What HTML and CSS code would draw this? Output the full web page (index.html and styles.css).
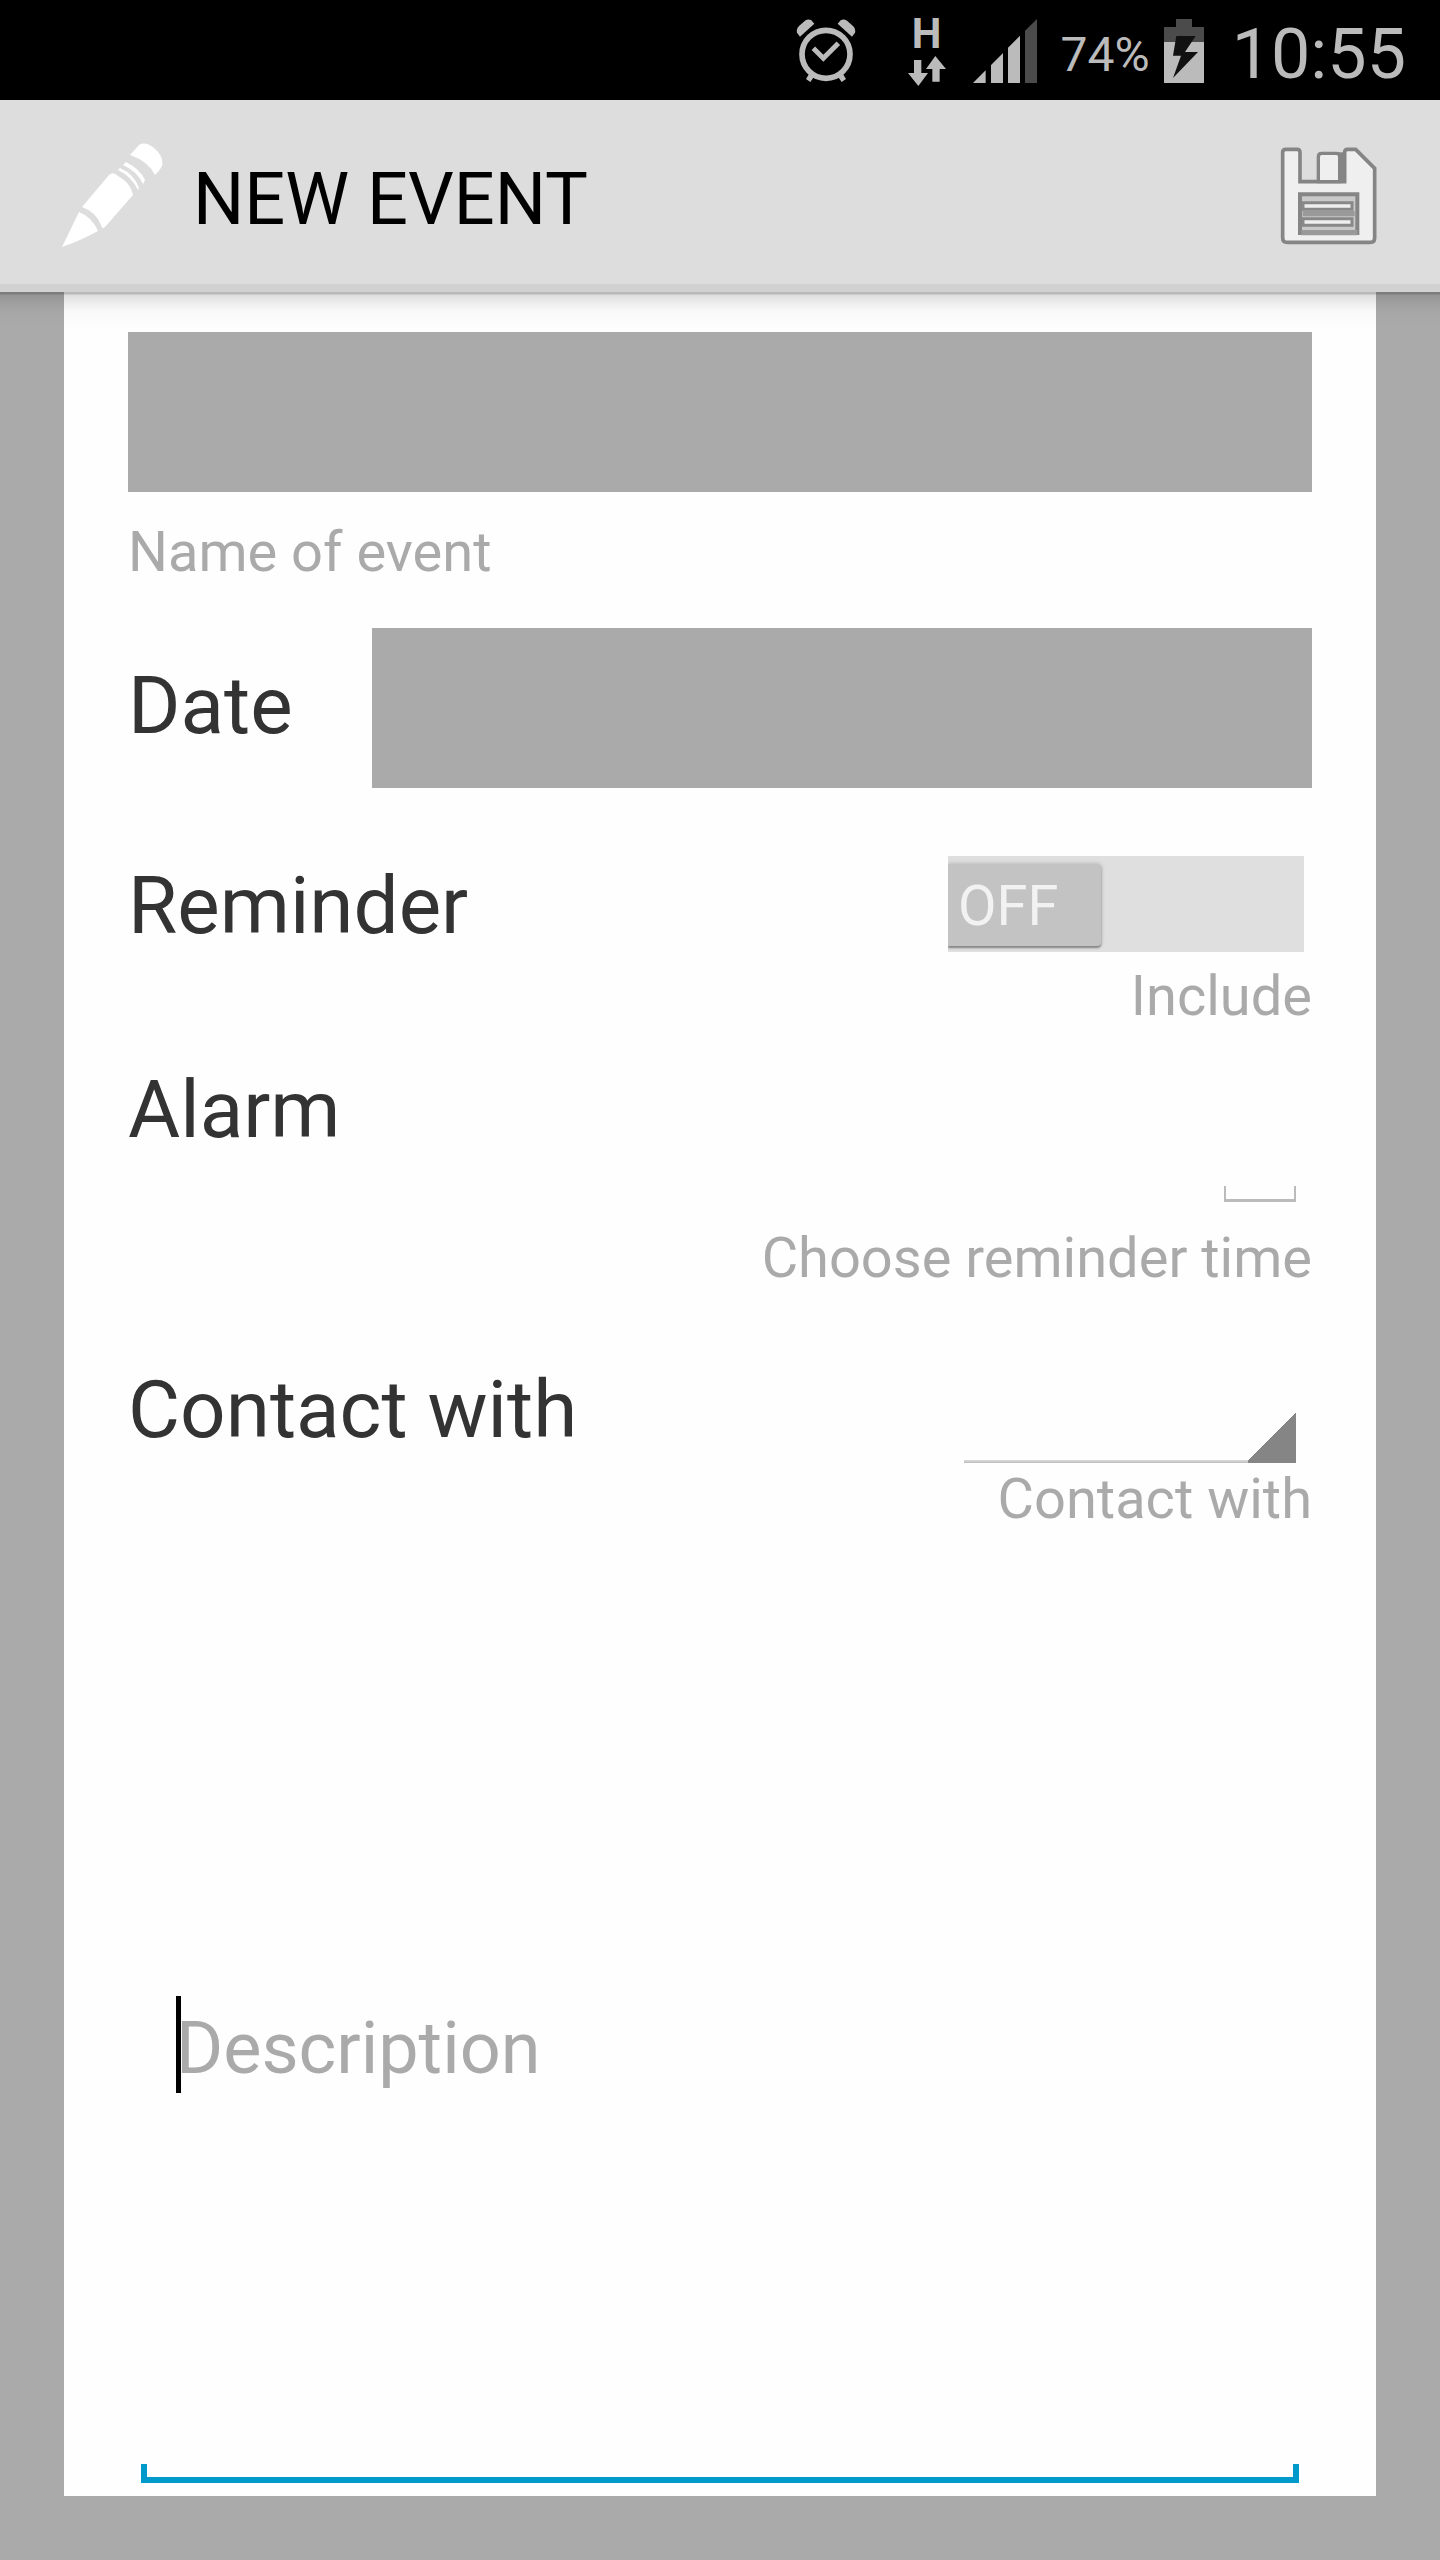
FILE: index.html
```html
<!DOCTYPE html>
<html lang="en">
<head>
<meta charset="utf-8">
<meta name="viewport" content="width=device-width, initial-scale=1">
<title>New event</title>
<link rel="stylesheet" href="styles.css">
</head>
<body>
<div class="status-bar">
  <svg class="icon-alarm" viewBox="50 58 180 192" aria-hidden="true">
    <circle cx="140" cy="164" r="72" fill="none" stroke="#bbb" stroke-width="17"/>
    <path d="M102 146l30 30 45-45" fill="none" stroke="#bbb" stroke-width="15"/>
    <path d="M62 111l-9-12q-3-12 6-20l18-16q10-6 19-1l9 10zM218 111l9-12q3-12-6-20l-18-16q-10-6-19-1l-9 10z" fill="#bbb"/>
    <path d="M89 223l-9 15 13 9 11-16zM191 223l9 15-13 9-11-16z" fill="#bbb"/>
  </svg>
  <div class="network">
    <span class="network-type">H</span>
    <svg class="icon-arrows" viewBox="387 168 114 90" aria-hidden="true">
      <path d="M405 180h22v39h20l-29 39-31-39h18zM469 168l32 39h-19v38h-22v-38h-19z" fill="#bbb"/>
    </svg>
  </div>
  <svg class="icon-signal" viewBox="582 57 192 192" aria-hidden="true">
    <path d="M582 249l38-38v38zM636 249v-54l36-36v90zM687 249V143l36-36v142z" fill="#bbb"/>
    <path d="M738 249V92l36-35v192z" fill="#4b4b4b"/>
  </svg>
  <span class="battery-level">74%</span>
  <svg class="icon-battery" viewBox="369 54 120 192" aria-hidden="true">
    <path d="M369 123V78h36V54h48v24h36v45z" fill="#4b4b4b"/>
    <path d="M369 123h120v123H369z" fill="#bbb"/>
    <path d="M406 105h58l-32 48h39l-75 78 24-67h-24z" fill="#111"/>
  </svg>
  <span class="clock">10:55</span>
</div>

<header class="action-bar">
  <svg class="icon-pencil" viewBox="60 142 104 108" aria-hidden="true">
    <path fill="#fff" d="M62 247L79 212Q92 217 98 231Q82 240 62 247zM82 207L109 175Q113 171 118 176Q131 183 133 195L105 227Q102 230 101 225Q96 212 82 207zM118 170l2-2q14 6 19 20l-1 2q-7-14-20-20zM123 165l3-3q14 7 19 18l-2 4q-6-13-20-19zM130 155L139 145Q145 141 154 148Q164 156 162 166Q159 172 155 175Q148 161 130 155z"/>
  </svg>
  <h1 class="title">NEW EVENT</h1>
  <button class="save" type="submit" form="event-form" aria-label="Save">
    <svg class="icon-save" viewBox="238 170 291 300" aria-hidden="true">
      <path d="M246 189q0-9 10-9h33q9 0 9 9v88h134v-88q0-9 9-9h24l57 57v208q0 14-14 14H260q-14 0-14-14z" fill="#efefef" stroke="#858585" stroke-width="11"/>
      <path d="M353 277v-75q0-10 10-10h44q10 0 10 10v75z" fill="#efefef" stroke="#858585" stroke-width="10"/>
      <path d="M423 189v85" stroke="#858585" stroke-width="16"/>
      <path d="M298 315h172v116H298z" fill="#c9c9c9" stroke="#858585" stroke-width="12"/>
      <path d="M306 373h156M302 430h168" stroke="#999" stroke-width="16"/>
      <path d="M307 340h147v20H307zM307 388h147v20H307z" fill="#efefef" stroke="#888" stroke-width="9"/>
    </svg>
  </button>
</header>

<main class="page">
  <form class="card" id="event-form">
    <input class="field" id="event-name" type="text">
    <label class="hint" for="event-name">Name of event</label>

    <div class="row row-date">
      <label class="label" for="event-date">Date</label>
      <input class="field" id="event-date" type="text">
    </div>

    <div class="row row-reminder">
      <label class="label" for="reminder">Reminder</label>
      <div class="control">
        <label class="switch">
          <input class="switch-input" id="reminder" type="checkbox" role="switch">
          <span class="switch-thumb">OFF</span>
        </label>
        <span class="hint">Include</span>
      </div>
    </div>

    <div class="row row-alarm">
      <label class="label" for="alarm">Alarm</label>
      <div class="control">
        <input class="alarm-input" id="alarm" type="text">
        <span class="hint">Choose reminder time</span>
      </div>
    </div>

    <div class="row row-contact">
      <label class="label" for="contact">Contact with</label>
      <div class="control">
        <select class="spinner" id="contact"><option value=""></option></select>
        <span class="hint">Contact with</span>
      </div>
    </div>

    <div class="description">
      <textarea class="description-input" placeholder="Description" aria-label="Description"></textarea>
      <span class="caret"></span>
    </div>
  </form>
</main>
</body>
</html>
```
FILE: styles.css
```css
* {
  box-sizing: border-box;
}

body {
  margin: 0;
  min-height: 100vh;
  display: flex;
  flex-direction: column;
  background: #aaa;
  font-family: Roboto, "Liberation Sans", sans-serif;
  color: #333;
}

input,
select,
textarea,
button {
  margin: 0;
  padding: 0;
  border: 0;
  border-radius: 0;
  background: none;
  appearance: none;
  outline: none;
  font: inherit;
  color: inherit;
}

svg {
  display: block;
  flex: none;
}

/* Status bar */

.status-bar {
  height: 100px;
  padding: 2px 34px 0 0;
  display: flex;
  align-items: center;
  justify-content: flex-end;
  background: #000;
  color: #bbb;
}

.icon-alarm {
  width: 60px;
  height: 64px;
  margin-right: 52px;
}

.network {
  margin-right: 27px;
  display: flex;
  flex-direction: column;
  align-items: center;
  gap: 4px;
}

.network-type {
  font-size: 42px;
  font-weight: 700;
  line-height: 36px;
}

.icon-arrows {
  width: 38px;
  height: 30px;
}

.icon-signal {
  width: 64px;
  height: 64px;
  margin-right: 24px;
}

.battery-level,
.clock {
  padding-top: 6px;
}

.battery-level {
  margin-right: 14px;
  font-size: 48px;
}

.icon-battery {
  width: 40px;
  height: 64px;
  margin-right: 28px;
}

.clock {
  font-size: 70px;
}

/* Action bar */

.action-bar {
  position: relative;
  height: 192px;
  padding: 8px 63px 0 60px;
  display: flex;
  align-items: center;
  background: #ddd;
  border-bottom: 8px solid #d1d1d1;
}

.action-bar::after {
  content: "";
  position: absolute;
  top: 100%;
  left: 0;
  right: 0;
  height: 38px;
  margin-top: 8px;
  background: linear-gradient(rgba(0, 0, 0, 0.27) 0 2px, rgba(0, 0, 0, 0.13) 3px, rgba(0, 0, 0, 0.07) 10px, rgba(0, 0, 0, 0.02) 20px, transparent);
  pointer-events: none;
}

.icon-pencil {
  width: 104px;
  height: 108px;
}

.title {
  margin: 0 auto 0 29px;
  padding-top: 6px;
  font-size: 72px;
  font-weight: 400;
  color: #000;
}

.icon-save {
  width: 97px;
  height: 100px;
}

/* Form card */

.page {
  flex: 1;
  display: flex;
  padding: 0 64px 64px;
}

.card {
  flex: 1;
  min-width: 0;
  padding-top: 40px;
  display: flex;
  flex-direction: column;
  background: #fefefe;
}

.card > .field,
.card > .hint,
.row {
  margin-left: 64px;
  margin-right: 64px;
}

.field {
  height: 160px;
  flex: none;
  min-width: 0;
  padding: 0 24px;
  background: #aaa;
  font-size: 72px;
}

.hint {
  font-size: 56px;
  line-height: 72px;
  color: #aaa;
}

.card > .hint {
  margin-top: 24px;
}

.row {
  display: flex;
  justify-content: space-between;
}

.label {
  padding-top: 2px;
  font-size: 80px;
  line-height: 96px;
}

.control {
  display: flex;
  flex-direction: column;
  align-items: flex-end;
}

.row-date {
  margin-top: 40px;
  gap: 79px;
}

.row-date .label {
  padding-top: 30px;
}

.row-date .field {
  flex: 1;
}

.row-reminder {
  margin-top: 68px;
}

.switch {
  position: relative;
  width: 356px;
  height: 96px;
  margin: 0 8px 8px;
  padding: 8px 0 6px;
  display: flex;
  overflow: hidden;
  background: #dfdfdf;
}

.switch-input {
  position: absolute;
  inset: 0;
}

.switch-thumb {
  width: 153px;
  padding-left: 10px;
  border-radius: 0 4px 4px 0;
  background: #c3c3c3;
  box-shadow: 0 2px 2px #888, 0 0 4px #aaa;
  font-size: 56px;
  line-height: 84px;
  color: #f2f2f2;
}

.row-alarm {
  margin-top: 28px;
}

.alarm-input {
  width: 72px;
  height: 142px;
  margin: 0 16px 20px;
  background:
    linear-gradient(#bbb, #bbb) left bottom / 2px 16px no-repeat,
    linear-gradient(#bbb, #bbb) right bottom / 2px 16px no-repeat,
    linear-gradient(#bbb, #bbb) left bottom / 100% 3px no-repeat;
}

.row-contact {
  margin-top: 66px;
}

.spinner {
  width: 332px;
  height: 103px;
  margin: 0 16px;
  background:
    linear-gradient(135deg, transparent 50%, #858585 50%) right bottom / 48px 52px no-repeat,
    linear-gradient(#ddd, #bbb) left bottom / 100% 3px no-repeat;
}

/* Description */

.description {
  position: relative;
  flex: 1;
  display: flex;
  padding: 0 77px 13px;
}

.description-input {
  flex: 1;
  min-width: 0;
  padding: 466px 35px 48px;
  resize: none;
  font-size: 72px;
  line-height: 96px;
  background:
    linear-gradient(#0099cc, #0099cc) left bottom / 6px 19px no-repeat,
    linear-gradient(#0099cc, #0099cc) right bottom / 6px 19px no-repeat,
    linear-gradient(#0099cc, #0099cc) left bottom / 100% 6px no-repeat;
}

.description-input::placeholder {
  color: #aaa;
  opacity: 1;
}

.caret {
  position: absolute;
  top: 461px;
  left: 112px;
  width: 5px;
  height: 97px;
  background: #000;
}
```
